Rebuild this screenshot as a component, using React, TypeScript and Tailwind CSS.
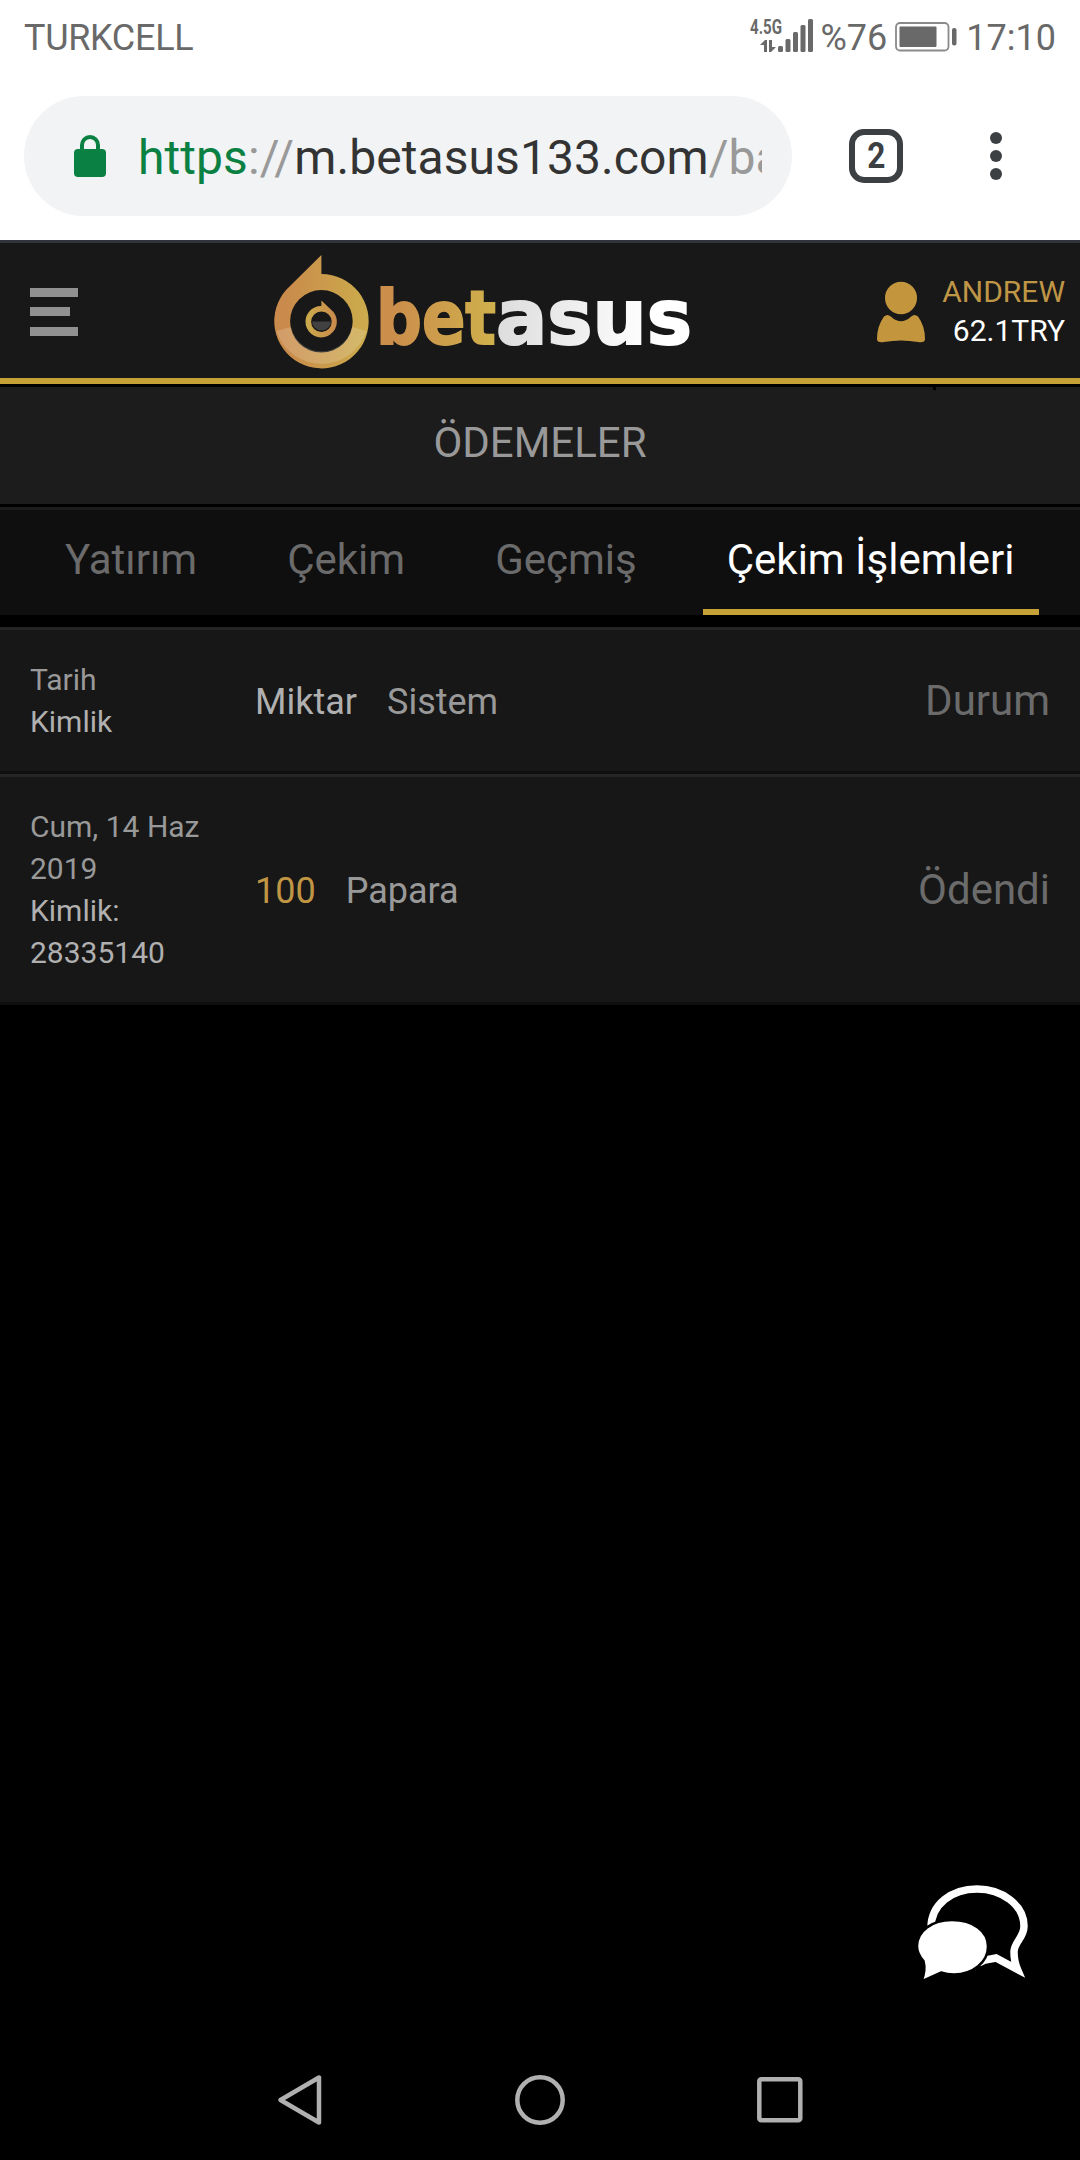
import clsx from "clsx";

type Row = {
    date: string;
    id: string[];
    amount: string;
    system: string;
    status: string;
    gold?: boolean;
}

const tabs = ["Yatırım", "Çekim", "Geçmiş", "Çekim İşlemleri"];

const rows: Row[] = [
    { date: "Tarih", id: ["Kimlik"], amount: "Miktar", system: "Sistem", status: "Durum" },
    { date: "Cum, 14 Haz 2019", id: ["Kimlik:", "28335140"], amount: "100", system: "Papara", status: "Ödendi", gold: true },
];

function StatusBar() {
    return (
        <div className="flex h-[72px] items-center justify-between bg-white pl-6 pr-6 text-[36px] leading-[42px] text-[#696969]">
            <span className="pt-[3px] tracking-[-0.3px]">TURKCELL</span>
            <div className="flex items-center">
                <svg width="66" height="36" viewBox="0 0 66 36" className="mr-1.5 block overflow-visible" fill="#696969">
                    <text x="1" y="16" fontSize="21" fontWeight="700" textLength="32" lengthAdjust="spacingAndGlyphs">4.5G</text>
                    <path d="M11 27l5-5h2v12h-3v-7zM20 22h3v7h4l-5 5h-2z" />
                    <rect x="29" y="28" width="5" height="6" rx="1.5" />
                    <rect x="36.5" y="21" width="5" height="13" rx="1.5" />
                    <rect x="44" y="14" width="5" height="20" rx="1.5" />
                    <rect x="51.5" y="7" width="5" height="27" rx="1.5" />
                    <rect x="59" y="1" width="5" height="33" rx="1.5" />
                </svg>
                <span className="pt-[3px]">%76</span>
                <svg width="62" height="30" viewBox="0 0 62 30" className="ml-2 mr-[9px] mt-px block" fill="#696969">
                    <rect x="1" y="1" width="52.5" height="27.5" rx="4" fill="none" stroke="#8a8a8a" strokeWidth="1.8" />
                    <rect x="4.5" y="4.5" width="37" height="20.5" rx="1" />
                    <rect x="57" y="6" width="4.5" height="17.5" rx="2" />
                </svg>
                <span className="pt-[3px]">17:10</span>
            </div>
        </div>
    );
}

function AddressBar() {
    return (
        <div className="flex h-[168px] items-center bg-white pl-6">
            <div className="flex h-[120px] w-[768px] items-center rounded-full bg-[#f1f3f4] pl-[50px] pr-[30px]">
                <svg width="32" height="42" viewBox="0 0 32 42" className="block shrink-0">
                    <path d="M8 16V10a8 8 0 0 1 16 0v6" fill="none" stroke="#0b8043" strokeWidth="4" />
                    <rect y="14" width="32" height="28" rx="4" fill="#0b8043" />
                </svg>
                <div className="ml-8 mt-[3px] flex-1 overflow-hidden whitespace-nowrap text-[48px] leading-[60px] tracking-[0.08px] text-[#999999]">
                    <span className="text-[#0b8043]">https</span>://<span className="text-[#333333]">m.betasus133.com</span>/bahis
                </div>
            </div>
            <div className="ml-[57px] grid h-[54px] w-[54px] place-items-center rounded-[15px] border-[6px] border-[#3c4043]">
                <span className="scale-x-[.88] text-[36px] font-bold leading-[42px] text-[#3c4043]">2</span>
            </div>
            <div className="ml-[87px] flex flex-col gap-1.5">
                <span className="h-3 w-3 rounded-full bg-[#3c4043]" />
                <span className="h-3 w-3 rounded-full bg-[#3c4043]" />
                <span className="h-3 w-3 rounded-full bg-[#3c4043]" />
            </div>
        </div>
    );
}

function Logo() {
    return (
        <svg width="420" height="117" viewBox="0 0 420 117" className="block">
            <defs>
                <linearGradient id="ring" x1="0" x2="1">
                    <stop offset="0.1" stopColor="#c98a4b" />
                    <stop offset="1" stopColor="#ccac4c" />
                </linearGradient>
                <linearGradient id="ringBack" x1="1" x2="0">
                    <stop offset="0" stopColor="#c98a4b" />
                    <stop offset="1" stopColor="#ccac4c" />
                </linearGradient>
                <linearGradient id="bet" gradientUnits="userSpaceOnUse" x1="108" x2="222" y1="0" y2="0">
                    <stop offset="0.1" stopColor="#cb8e4b" />
                    <stop offset="1" stopColor="#cfb04c" />
                </linearGradient>
                <linearGradient id="asus" gradientUnits="userSpaceOnUse" x1="224" x2="415" y1="0" y2="0">
                    <stop offset="0" stopColor="#dddddd" />
                    <stop offset="0.8" stopColor="#ffffff" />
                </linearGradient>
            </defs>
            <path fillRule="evenodd" fill="url(#ring)" d="M47.400 0V19A47.200 47.200 0 1 1 12.500 34.500ZM47.400 35A31.300 31.300 0 1 0 47.400 97.600A31.300 31.300 0 1 0 47.400 35Z" />
            <path d="M2.400 76L17 72A31.300 31.300 0 0 0 78 72L92.400 76A47.200 47.200 0 0 1 2.400 76Z" fill="#ffffff" fillOpacity="0.17" />
            <path d="M38 66.500H57A9.500 9 0 0 1 38 66.500Z" fill="#414141" />
            <path fillRule="evenodd" fill="url(#ringBack)" d="M47.400 45.500L59.500 57A15.700 15.700 0 1 1 47.400 51ZM47.400 56.500A10.300 10.300 0 1 0 47.400 77.100A10.300 10.300 0 1 0 47.400 56.500Z" />
            <g fontFamily="DejaVu Sans" fontWeight="700" strokeWidth="2">
                <text x="102" y="89" fontSize="74" textLength="120" lengthAdjust="spacingAndGlyphs" fill="url(#bet)" stroke="url(#bet)">bet</text>
                <text x="222" y="89" fontSize="76" textLength="196" lengthAdjust="spacingAndGlyphs" fill="url(#asus)" stroke="url(#asus)">asus</text>
            </g>
        </svg>
    );
}

function Header() {
    return (
        <header className="flex h-[144px] items-start justify-between border-b-6 border-t-3 border-b-[#c5a137] border-t-[#30353d] bg-[#181818]">
            <div className="ml-[30px] mt-[45px] flex w-[244px] flex-col">
                <span className="h-[9px] w-12 bg-[#919191]" />
                <span className="mt-2.5 h-[9px] w-10 bg-[#919191]" />
                <span className="mt-[11px] h-[9px] w-12 bg-[#919191]" />
            </div>
            <div className="mt-3">
                <Logo />
            </div>
            <div className="mr-[15px] mt-[29px] flex flex-1 justify-end">
                <svg width="48" height="62" viewBox="0 0 48 62" className="mr-[17px] mt-[9px] block" fill="#c3963e">
                    <ellipse cx="24" cy="17" rx="16" ry="16.200" />
                    <path d="M7 35.500Q11 32 15 36.500Q24 44 33 36.500Q37 32 41 35.500Q48 45 48 58Q48 62 41 61Q24 58 7 61Q0 62 0 58Q0 45 7 35.500Z" />
                </svg>
                <div className="text-right text-[30px] leading-[39px]">
                    <div className="text-[#bf9546]">ANDREW</div>
                    <div className="text-white">62.1TRY</div>
                </div>
            </div>
        </header>
    );
}

function HistoryRow({ row }: { row: Row }) {
    return (
        <div className="flex items-center border-b-3 border-t-3 border-b-[#0f0f0f] border-t-[#252525] bg-[#171717] px-[30px] py-[28.5px]">
            <div className="w-[195px] text-[30px] leading-[42px] text-[#999999]">
                <div>{row.date}</div>
                {row.id.map((line) => (
                    <div key={line} className="text-[#b0b0b0]">{line}</div>
                ))}
            </div>
            <div className="ml-[30px] flex flex-1 gap-[30px] pt-0.5 text-[36px] leading-[42px] text-[#999999]">
                <span className={clsx(row.gold ? "text-[#c09645]" : "text-[#b0b0b0]")}>{row.amount}</span>
                <span>{row.system}</span>
            </div>
            <span className="text-[42px] leading-[48px] text-[#6b6b6b]">{row.status}</span>
        </div>
    );
}

function ChatBubbles() {
    return (
        <svg width="110" height="98" viewBox="0 0 110 98" className="block overflow-visible">
            <path d="M12 44C12 20 33 5 58 5C83 5 105 21 105 42C105 54 95 58 95 68C95 77 97 82 98.500 85.500L77 74L66 76L60 79" fill="none" stroke="#ffffff" strokeWidth="7.500" />
            <path d="M33 36C54 36 69 47 69 62.500C69 78 54 90.500 35 90.500Q28 90.500 22 88.500L2.500 97.500Q7 86 4.500 77C0 72-2 68-2 62C-2 47 13 36 33 36Z" fill="#ffffff" stroke="#000000" strokeWidth="2.500" />
        </svg>
    );
}

export default function App() {
    return (
        <div className="flex h-[2160px] w-[1080px] flex-col overflow-hidden bg-black font-['Roboto',sans-serif]">
            <StatusBar />
            <AddressBar />
            <Header />

            <div className="relative mt-[3px] grid h-[117px] place-items-center bg-[#1c1c1c] pb-1.5 text-[42px] leading-[48px] text-[#999999]">
                <span>ÖDEMELER</span>
                <span className="absolute left-[933px] top-0 h-[3px] w-[3px] bg-black" />
            </div>

            <nav className="mt-[3px] flex h-[108px] border-t-3 border-t-[#1c1c1c] bg-[#0f0f0f] pl-[41px] text-[42px] leading-[100px] text-[#6b6b6b]">
                {tabs.map((tab, i) => (
                    <span
                        key={tab}
                        className={clsx(
                            "mr-[42px] pl-6 whitespace-nowrap",
                            i === 3 ? "pr-[25px] border-b-6 border-b-[#c5a137] text-white" : "pr-6"
                        )}
                    >
                        {tab}
                    </span>
                ))}
            </nav>

            <main className="mt-3 flex-1">
                {rows.map((row) => <HistoryRow key={row.status} row={row} />)}
            </main>

            <div className="mb-[58px] mr-[51px] self-end">
                <ChatBubbles />
            </div>

            <div className="flex h-[120px] shrink-0 items-center justify-center gap-[192px] text-[#b0b0b0]">
                <svg width="46" height="52" viewBox="0 0 46 52" fill="none" stroke="currentColor" strokeWidth="4.500" strokeLinejoin="round">
                    <path d="M42 3.500V48.500L3.500 26Z" />
                </svg>
                <svg width="50" height="50" viewBox="0 0 50 50" fill="none" stroke="currentColor" strokeWidth="4.500">
                    <circle cx="25" cy="25" r="22.700" />
                </svg>
                <svg width="46" height="46" viewBox="0 0 46 46" fill="none" stroke="currentColor" strokeWidth="4.500">
                    <rect x="2.300" y="2.300" width="41" height="41" rx="2" />
                </svg>
            </div>
        </div>
    );
}
